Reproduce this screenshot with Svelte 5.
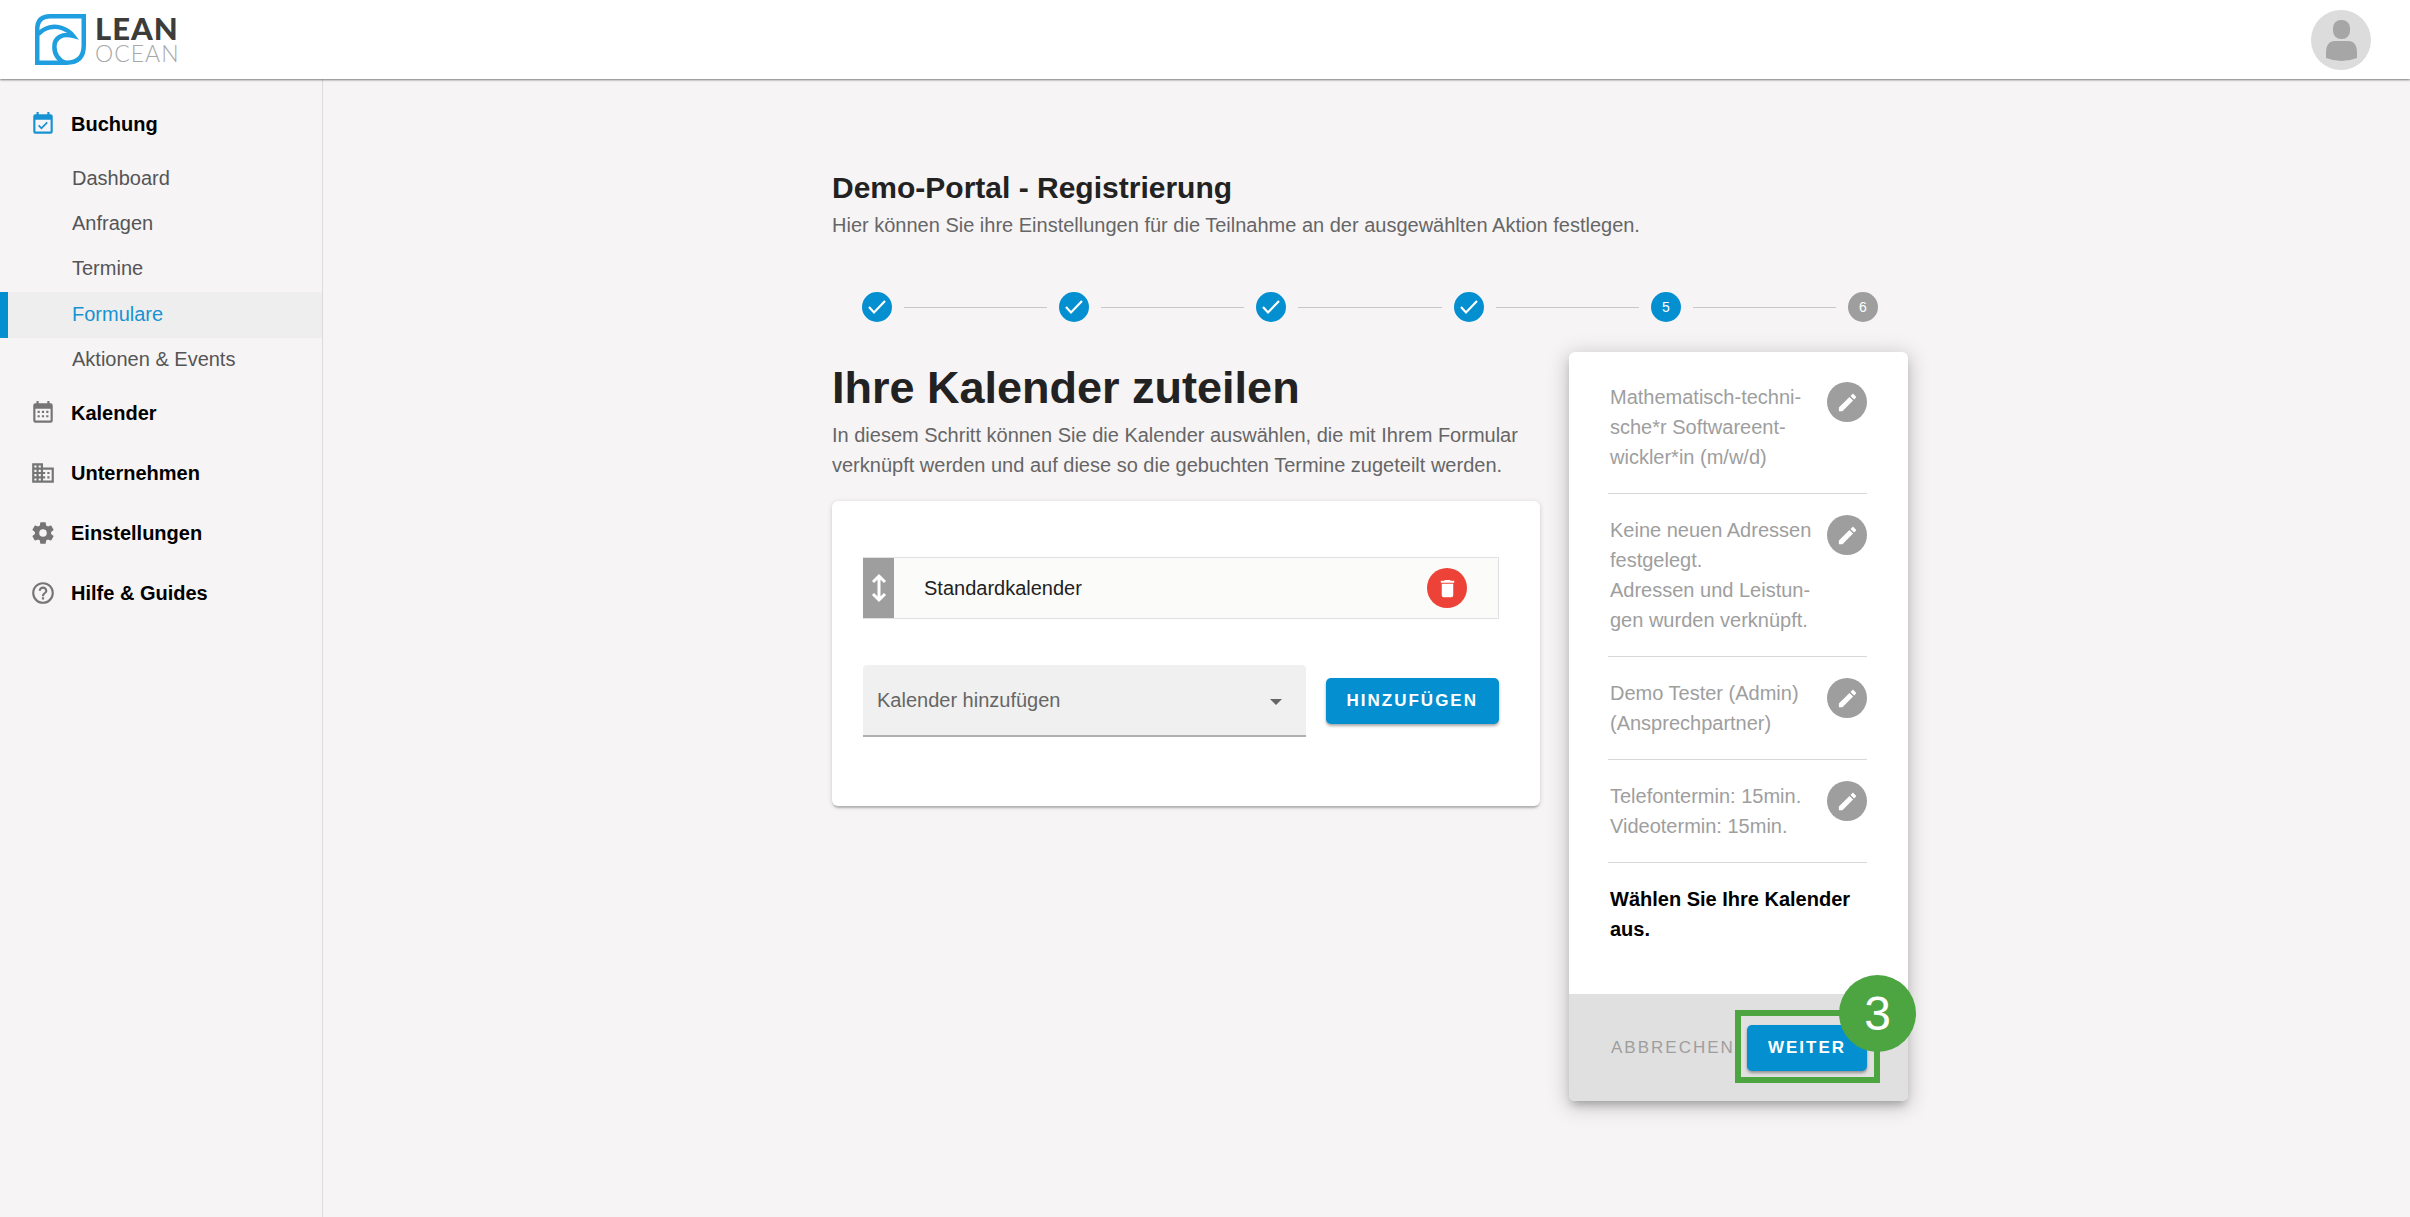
<script lang="ts">
  const icons = {
    calendarCheck: 'M19 3h-1V1h-2v2H8V1H6v2H5a2 2 0 0 0-2 2v14a2 2 0 0 0 2 2h14a2 2 0 0 0 2-2V5a2 2 0 0 0-2-2m0 16H5V8h14v11M16.5 11l-1.1-1.1-4.8 4.9-2.1-2.1-1.1 1.1 3.2 3.2 5.9-6z',
    calendar: 'M19 3h-1V1h-2v2H8V1H6v2H5a2 2 0 0 0-2 2v14a2 2 0 0 0 2 2h14a2 2 0 0 0 2-2V5a2 2 0 0 0-2-2m0 16H5V8h14v11M7 10h2v2H7v-2m4 0h2v2h-2v-2m4 0h2v2h-2v-2M7 14h2v2H7v-2m4 0h2v2h-2v-2m4 0h2v2h-2v-2',
    domain: 'M18 15h-2v2h2m0-6h-2v2h2m2 6h-8v-2h2v-2h-2v-2h2v-2h-2V9h8M10 7H8V5h2m0 6H8V9h2m0 6H8v-2h2m0 6H8v-2h2M6 7H4V5h2m0 6H4V9h2m0 6H4v-2h2m0 6H4v-2h2m6-10V3H2v18h20V7H12z',
    cog: 'M12 15.5A3.5 3.5 0 0 1 8.5 12 3.5 3.5 0 0 1 12 8.5a3.5 3.5 0 0 1 3.5 3.5 3.5 3.5 0 0 1-3.5 3.5m7.43-2.53c.04-.32.07-.64.07-.97s-.03-.66-.07-1l2.11-1.63c.19-.15.24-.42.12-.64l-2-3.46c-.12-.22-.39-.31-.61-.22l-2.49 1c-.52-.39-1.06-.73-1.69-.98l-.37-2.65A.506.506 0 0 0 14 2h-4c-.25 0-.46.18-.5.42l-.37 2.65c-.63.25-1.17.59-1.69.98l-2.49-1c-.22-.09-.49 0-.61.22l-2 3.46c-.13.22-.07.49.12.64L4.57 11c-.04.34-.07.67-.07 1s.03.65.07.97l-2.11 1.66c-.19.15-.25.42-.12.64l2 3.46c.12.22.39.3.61.22l2.49-1.01c.52.4 1.06.74 1.69.99l.37 2.65c.04.24.25.42.5.42h4c.25 0 .46-.18.5-.42l.37-2.65c.63-.26 1.17-.59 1.69-.99l2.49 1.01c.22.08.49 0 .61-.22l2-3.46c.12-.22.07-.49-.12-.64l-2.11-1.66z',
    help: 'M11 18h2v-2h-2v2m1-16A10 10 0 0 0 2 12a10 10 0 0 0 10 10 10 10 0 0 0 10-10A10 10 0 0 0 12 2m0 18c-4.41 0-8-3.59-8-8s3.59-8 8-8 8 3.59 8 8-3.59 8-8 8m0-14a4 4 0 0 0-4 4h2a2 2 0 0 1 2-2 2 2 0 0 1 2 2c0 2-3 1.75-3 5h2c0-2.25 3-2.5 3-5a4 4 0 0 0-4-4z',
    pencil: 'M20.71 7.04c.39-.39.39-1.04 0-1.41l-2.34-2.34c-.37-.39-1.02-.39-1.41 0l-1.84 1.83 3.75 3.75M3 17.25V21h3.75L17.81 9.93l-3.75-3.75L3 17.25z',
    trash: 'M19 4h-3.5l-1-1h-5l-1 1H5v2h14M6 19a2 2 0 0 0 2 2h8a2 2 0 0 0 2-2V7H6v12z',
  };

  const unterpunkte = ['Dashboard', 'Anfragen', 'Termine', 'Formulare', 'Aktionen & Events'];

  const bereiche = [
    { name: 'Kalender', icon: icons.calendar },
    { name: 'Unternehmen', icon: icons.domain },
    { name: 'Einstellungen', icon: icons.cog },
    { name: 'Hilfe & Guides', icon: icons.help },
  ];

  const schritte = [1, 2, 3, 4, 5, 6];

  // \u00AD = mögliche Trennstelle
  const zusammenfassung = [
    ['Mathematisch-techni\u00ADsche*r Softwareent\u00ADwickler*in (m/w/d)'],
    ['Keine neuen Adressen festgelegt.', 'Adressen und Leistun\u00ADgen wurden verknüpft.'],
    ['Demo Tester (Admin)', '(Ansprechpartner)'],
    ['Telefontermin: 15min.', 'Videotermin: 15min.'],
  ];

  let aktiverPunkt = $state('Formulare');
  let aktiverSchritt = $state(5);
  let kalender = $state(['Standardkalender']);
  let auswahl = $state('');

  function hinzufuegen() {
    if (auswahl && !kalender.includes(auswahl)) kalender.push(auswahl);
    auswahl = '';
  }

  function entfernen(name: string) {
    kalender = kalender.filter((k) => k !== name);
  }
</script>

{#snippet icon(pfad: string, klasse: string)}
  <svg class={klasse} viewBox="0 0 24 24" aria-hidden="true"><path d={pfad} /></svg>
{/snippet}

<div class="app">
  <header>
    <a class="logo" href="/">
      <svg viewBox="0 0 50 50" aria-hidden="true">
        <path d="M15 2.2H47.8V31Q47.8 47.8 31 47.8H2.2V15Q2.2 2.2 15 2.2Z" />
        <path d="M3 20C9 13 19 10.500 27 14C32 16 35 18 37.500 21.500C27 18.500 19 23 19 32C19 39 23 45 30 48" />
      </svg>
      <span class="logo-text">
        <span class="lean">LEAN</span>
        <span class="ocean">OCEAN</span>
      </span>
    </a>
    <button class="avatar" aria-label="Profil">
      <svg viewBox="0 0 60 60" aria-hidden="true">
        <rect x="22" y="10" width="17" height="19" rx="8" />
        <path d="M15 43Q15 31 24 31H37Q46 31 46 43V48Q30.500 54 15 48Z" />
      </svg>
    </button>
  </header>

  <div class="layout">
    <nav>
      <a class="bereich aktuell" href="#buchung">{@render icon(icons.calendarCheck, 'nav-icon')}Buchung</a>
      <div class="unterpunkte">
        {#each unterpunkte as punkt}
          <a
            class="unterpunkt"
            class:aktiv={aktiverPunkt === punkt}
            href="#{punkt.toLowerCase()}"
            onclick={() => aktiverPunkt = punkt}
          >
            {punkt}
          </a>
        {/each}
      </div>
      {#each bereiche as b}
        <a class="bereich" href="#{b.name.toLowerCase()}">{@render icon(b.icon, 'nav-icon')}{b.name}</a>
      {/each}
    </nav>

    <main>
      <div class="inhalt">
        <h1>Demo-Portal - Registrierung</h1>
        <p class="untertitel">Hier können Sie ihre Einstellungen für die Teilnahme an der ausgewählten Aktion festlegen.</p>

        <div class="stepper">
          {#each schritte as s}
            {#if s > 1}<span class="linie"></span>{/if}
            <span class="schritt" class:offen={s > aktiverSchritt}>
              {#if s < aktiverSchritt}
                <svg viewBox="0 0 30 30" aria-hidden="true"><path d="M7 15L12 20.500L23 9" /></svg>
              {:else}
                {s}
              {/if}
            </span>
          {/each}
        </div>

        <div class="spalten">
          <section>
            <h2>Ihre Kalender zuteilen</h2>
            <p>
              In diesem Schritt können Sie die Kalender auswählen, die mit Ihrem Formular
              verknüpft werden und auf diese so die gebuchten Termine zugeteilt werden.
            </p>

            <div class="karte">
              {#each kalender as k}
                <div class="kalender">
                  <span class="griff">
                    <svg viewBox="0 0 16 30" aria-hidden="true"><path d="M8 3V27M2 9L8 3L14 9M2 21L8 27L14 21" /></svg>
                  </span>
                  <span class="kalender-name">{k}</span>
                  <button class="rund loeschen" aria-label="{k} löschen" onclick={() => entfernen(k)}>
                    {@render icon(icons.trash, 'rund-icon')}
                  </button>
                </div>
              {/each}

              <div class="auswahl">
                <div class="feld">
                  <select aria-label="Kalender hinzufügen" bind:value={auswahl}>
                    <option value="">Kalender hinzufügen</option>
                    <option>Standardkalender</option>
                  </select>
                  <svg class="pfeil" viewBox="0 0 12 6" aria-hidden="true"><path d="M0 0H12L6 6Z" /></svg>
                </div>
                <button class="knopf" onclick={hinzufuegen}>HINZUFÜGEN</button>
              </div>
            </div>
          </section>

          <aside>
            <div class="uebersicht">
              {#each zusammenfassung as zeilen}
                <div class="eintrag">
                  <div class="eintrag-text">
                    {#each zeilen as zeile}<p>{zeile}</p>{/each}
                  </div>
                  <button class="rund" aria-label="Bearbeiten">{@render icon(icons.pencil, 'rund-icon')}</button>
                </div>
              {/each}
              <p class="aufgabe">Wählen Sie Ihre Kalender aus.</p>
            </div>
            <footer>
              <button class="abbrechen">ABBRECHEN</button>
              <div class="weiter">
                <button class="knopf">WEITER</button>
                <span class="rahmen"></span>
                <span class="nummer">3</span>
              </div>
            </footer>
          </aside>
        </div>
      </div>
    </main>
  </div>
</div>

<style>
  :global(body) {
    margin: 0;
    background: #f6f4f5;
  }

  .app {
    display: flex;
    flex-direction: column;
    min-height: 100vh;
    font-family: "Liberation Sans", Arial, sans-serif;
    font-size: 20px;
    line-height: 30px;
    color: #666;
  }

  .app * {
    box-sizing: border-box;
  }

  h1,
  h2,
  p {
    margin: 0;
  }

  a {
    color: inherit;
    text-decoration: none;
  }

  button,
  select {
    font: inherit;
    border: none;
    cursor: pointer;
  }

  header {
    display: flex;
    align-items: center;
    justify-content: space-between;
    height: 79px;
    padding: 0 39px 0 35px;
    background: #fff;
    box-shadow: 0 1px 2px rgba(0, 0, 0, 0.5);
    z-index: 1;
  }

  .logo {
    display: flex;
    align-items: center;
    gap: 9px;
  }

  .logo svg {
    width: 51px;
    height: 51px;
    fill: none;
    stroke: #1f9fe0;
    stroke-width: 4.4;
  }

  .logo-text {
    display: flex;
    flex-direction: column;
    font-family: Lato, sans-serif;
  }

  .lean {
    font-size: 31px;
    line-height: 26px;
    font-weight: 900;
    letter-spacing: 1px;
    color: #3c3c3b;
  }

  .ocean {
    font-size: 23px;
    line-height: 24px;
    font-weight: 300;
    letter-spacing: 1px;
    color: #a8a8a8;
  }

  .avatar {
    width: 60px;
    height: 60px;
    padding: 0;
    border-radius: 50%;
    background: #dcdcdc;
  }

  .avatar svg {
    display: block;
    fill: #a6a6a6;
  }

  .layout {
    display: flex;
    flex: 1;
  }

  nav {
    flex: none;
    width: 323px;
    padding-top: 15px;
    border-right: 1px solid #dcdbdc;
  }

  .bereich {
    display: flex;
    align-items: center;
    gap: 15px;
    height: 60px;
    padding-left: 30px;
    font-weight: bold;
    color: #000;
  }

  .nav-icon {
    width: 26px;
    height: 26px;
    fill: #757575;
  }

  .aktuell .nav-icon {
    fill: #1793d3;
  }

  .unterpunkte {
    display: grid;
    height: 227px;
    margin-top: 2px;
  }

  .unterpunkt {
    display: flex;
    align-items: center;
    padding: 0 0 2px 64px;
    border-left: 8px solid transparent;
    color: #555;
  }

  .unterpunkt.aktiv {
    background: #eee;
    border-left-color: #038fd0;
    color: #1793d3;
  }

  main {
    flex: 1;
    padding: 89px 24px 60px 31px;
  }

  .inhalt {
    max-width: 1076px;
    margin: 0 auto;
  }

  h1 {
    font-size: 30px;
    line-height: 40px;
    color: #222;
  }

  .untertitel {
    margin-top: 2px;
  }

  .stepper {
    display: flex;
    align-items: center;
    gap: 12px;
    margin-top: 52px;
    padding: 0 30px;
  }

  .schritt {
    display: flex;
    align-items: center;
    justify-content: center;
    width: 30px;
    height: 30px;
    border-radius: 50%;
    background: #038fd0;
    color: #fff;
    font-size: 14px;
  }

  .schritt.offen {
    background: #9e9e9e;
  }

  .schritt svg {
    width: 30px;
    fill: none;
    stroke: #fff;
    stroke-width: 2.2;
  }

  .linie {
    flex: 1;
    height: 1px;
    background: #c8c8c8;
  }

  .spalten {
    display: grid;
    grid-template-columns: 1fr 339px;
    align-items: start;
    gap: 29px;
    padding-top: 30px;
  }

  .spalten > * {
    min-width: 0;
  }

  h2 {
    padding-top: 4px;
    font-size: 45px;
    line-height: 64px;
    color: #222;
  }

  .karte {
    margin-top: 21px;
    padding: 56px 41px 69px 31px;
    border-radius: 6px;
    background: #fff;
    box-shadow: 0 3px 2px -1px rgba(0, 0, 0, 0.2), 0 1px 5px rgba(0, 0, 0, 0.16);
  }

  .kalender {
    display: flex;
    align-items: center;
    height: 62px;
    padding-right: 31px;
    border: 1px solid #e0e0e0;
    border-left: none;
    background: #fbfbfa;
    color: #222;
  }

  .griff {
    display: flex;
    align-items: center;
    justify-content: center;
    align-self: stretch;
    width: 31px;
    background: #9e9e9e;
  }

  .griff svg {
    width: 16px;
    height: 30px;
    fill: none;
    stroke: #fff;
    stroke-width: 3;
  }

  .kalender-name {
    flex: 1;
    padding-left: 30px;
  }

  .rund {
    display: flex;
    align-items: center;
    justify-content: center;
    flex: none;
    width: 40px;
    height: 40px;
    padding: 0;
    border-radius: 50%;
    background: #9e9e9e;
  }

  .loeschen {
    background: #ec4237;
  }

  .rund-icon {
    width: 23px;
    height: 23px;
    fill: #fff;
  }

  .auswahl {
    display: flex;
    align-items: center;
    gap: 20px;
    margin-top: 46px;
  }

  .feld {
    position: relative;
    flex: 1;
  }

  select {
    display: block;
    width: 100%;
    height: 72px;
    padding: 0 60px 0 14px;
    border-bottom: 2px solid #b0b0b0;
    border-radius: 4px 4px 0 0;
    background: #f0f0f0;
    color: #666;
    appearance: none;
  }

  .pfeil {
    position: absolute;
    right: 24px;
    top: 34px;
    width: 12px;
    height: 6px;
    fill: #666;
    pointer-events: none;
  }

  .knopf {
    height: 46px;
    padding: 0 21px;
    border-radius: 5px;
    background: #038fd0;
    box-shadow: 0 2px 3px rgba(0, 0, 0, 0.35);
    color: #fff;
    font-size: 17px;
    font-weight: bold;
    letter-spacing: 2px;
  }

  aside {
    border-radius: 6px;
    background: #fff;
    box-shadow: 0 6px 8px -3px rgba(0, 0, 0, 0.25), 0 4px 20px 3px rgba(0, 0, 0, 0.18);
  }

  .uebersicht {
    padding: 9px 41px 50px 39px;
  }

  .eintrag {
    display: flex;
    justify-content: space-between;
    gap: 8px;
    padding: 21px 0 21px 2px;
    border-bottom: 1px solid #d8d8d8;
    color: #9e9e9e;
  }

  .aufgabe {
    padding: 21px 0 0 2px;
    font-weight: bold;
    color: #000;
  }

  footer {
    display: flex;
    align-items: center;
    justify-content: space-between;
    height: 107px;
    padding: 0 41px 0 42px;
    border-radius: 0 0 6px 6px;
    background: #e0e0e0;
  }

  .abbrechen {
    padding: 0;
    background: none;
    color: #9e9e9e;
    font-size: 17px;
    letter-spacing: 2px;
  }

  .weiter {
    position: relative;
  }

  /* Hinweis-Markierung über dem Weiter-Knopf */
  .rahmen {
    position: absolute;
    inset: -15px -13px -12px -12px;
    border: 6px solid #4ca541;
    pointer-events: none;
  }

  .nummer {
    position: absolute;
    top: -50px;
    right: -49px;
    width: 77px;
    height: 77px;
    border-radius: 50%;
    background: #4ca541;
    color: #fff;
    font-size: 48px;
    line-height: 77px;
    text-align: center;
  }
</style>
